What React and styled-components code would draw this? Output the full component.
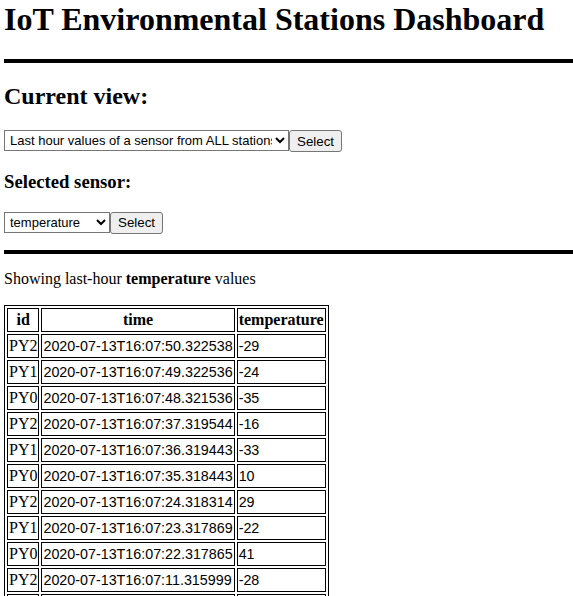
import React from "react";
import styled, { createGlobalStyle } from "styled-components";

const GlobalStyle = createGlobalStyle`
	html {
		overflow: hidden;
	}
	body {
		margin: 0;
		background: #fff;
		color: #000;
		font-family: "Liberation Serif", "Times New Roman", serif;
		font-size: 16px;
	}
`;

const rows = [
	["PY2", "2020-07-13T16:07:50.322538", "-29"],
	["PY1", "2020-07-13T16:07:49.322536", "-24"],
	["PY0", "2020-07-13T16:07:48.321536", "-35"],
	["PY2", "2020-07-13T16:07:37.319544", "-16"],
	["PY1", "2020-07-13T16:07:36.319443", "-33"],
	["PY0", "2020-07-13T16:07:35.318443", "10"],
	["PY2", "2020-07-13T16:07:24.318314", "29"],
	["PY1", "2020-07-13T16:07:23.317869", "-22"],
	["PY0", "2020-07-13T16:07:22.317865", "41"],
	["PY2", "2020-07-13T16:07:11.315999", "-28"],
	["PY1", "2020-07-13T16:07:10.315470", "-3"],
	["PY0", "2020-07-13T16:07:09.314962", "17"],
];

const App = () => {
	const submitForm = e => {
		e.preventDefault();
	};

	return (
		<Page>
			<GlobalStyle />
			<Title>IoT Environmental Stations Dashboard</Title>
			<Rule />

			<Heading>Current view:</Heading>
			<Form onSubmit={submitForm}>
				<Dropdown name="view" $width="285px" defaultValue="sensor">
					<option value="sensor">Last hour values of a sensor from ALL stations</option>
					<option value="station">Latest values of ALL sensors from a station</option>
				</Dropdown>
				<Button type="submit">Select</Button>
			</Form>

			<SubHeading>Selected sensor:</SubHeading>
			<Form onSubmit={submitForm}>
				<Dropdown name="sensor" $width="106px" defaultValue="temperature">
					<option value="temperature">temperature</option>
					<option value="humidity">humidity</option>
					<option value="wind_direction">wind_direction</option>
					<option value="wind_intensity">wind_intensity</option>
					<option value="rain_height">rain_height</option>
				</Dropdown>
				<Button type="submit">Select</Button>
			</Form>
			<Rule />

			<Caption>
				Showing last-hour <b>temperature</b> values
			</Caption>

			<Table>
				<thead>
					<tr>
						<Head>id</Head>
						<Head>time</Head>
						<Head>temperature</Head>
					</tr>
				</thead>
				<tbody>
					{rows.map((r, i) => (
						<tr key={i}>
							<Cell>{r[0]}</Cell>
							<Cell $sans>{r[1]}</Cell>
							<Cell $sans>{r[2]}</Cell>
						</tr>
					))}
				</tbody>
			</Table>
		</Page>
	);
};

const Page = styled.div`
	padding: 1px 0 0 4px;
`;

const Title = styled.h1`
	font-size: 32px;
	font-weight: bold;
	margin: 0 0 21.44px;
`;

const Rule = styled.hr`
	height: 0;
	margin: 8px 0;
	border: 2px solid #000;
`;

const Heading = styled.h2`
	font-size: 24px;
	font-weight: bold;
	margin: 19.92px 0;
`;

const SubHeading = styled.h3`
	font-size: 18.72px;
	font-weight: bold;
	margin: 18.72px 0;
`;

const Form = styled.form`
	display: flex;
	align-items: stretch;
	margin: 0 0 16px;
`;

const Dropdown = styled.select`
	width: ${p => p.$width};
	height: 21px;
	box-sizing: border-box;
	font-family: "Liberation Sans", Arial, sans-serif;
	font-size: 13px;
	color: #000;
	background: #fff;
	border: 1px solid #767676;
	border-radius: 0;
	padding: 0 0 0 1px;
	margin: 0;
`;

const Button = styled.button`
	height: 22px;
	box-sizing: border-box;
	font-family: "Liberation Sans", Arial, sans-serif;
	font-size: 13.33px;
	color: #000;
	background: #efefef;
	border: 1px solid #767676;
	border-radius: 3px;
	padding: 1px 7px;
	margin: 0;
`;

const Caption = styled.p`
	margin: 16px 0;
`;

const Table = styled.table`
	border: 1px solid #000;
	border-spacing: 2px;
	margin-top: 17px;
`;

const Head = styled.th`
	border: 1px solid #000;
	padding: 1px;
	line-height: 20px;
	font-weight: bold;
	text-align: center;
`;

const Cell = styled.td`
	border: 1px solid #000;
	padding: 1px;
	line-height: 20px;
	font-family: ${p => (p.$sans ? '"Liberation Sans", Arial, sans-serif' : "inherit")};
	font-size: ${p => (p.$sans ? "14.3px" : "16px")};
`;

export default App;
